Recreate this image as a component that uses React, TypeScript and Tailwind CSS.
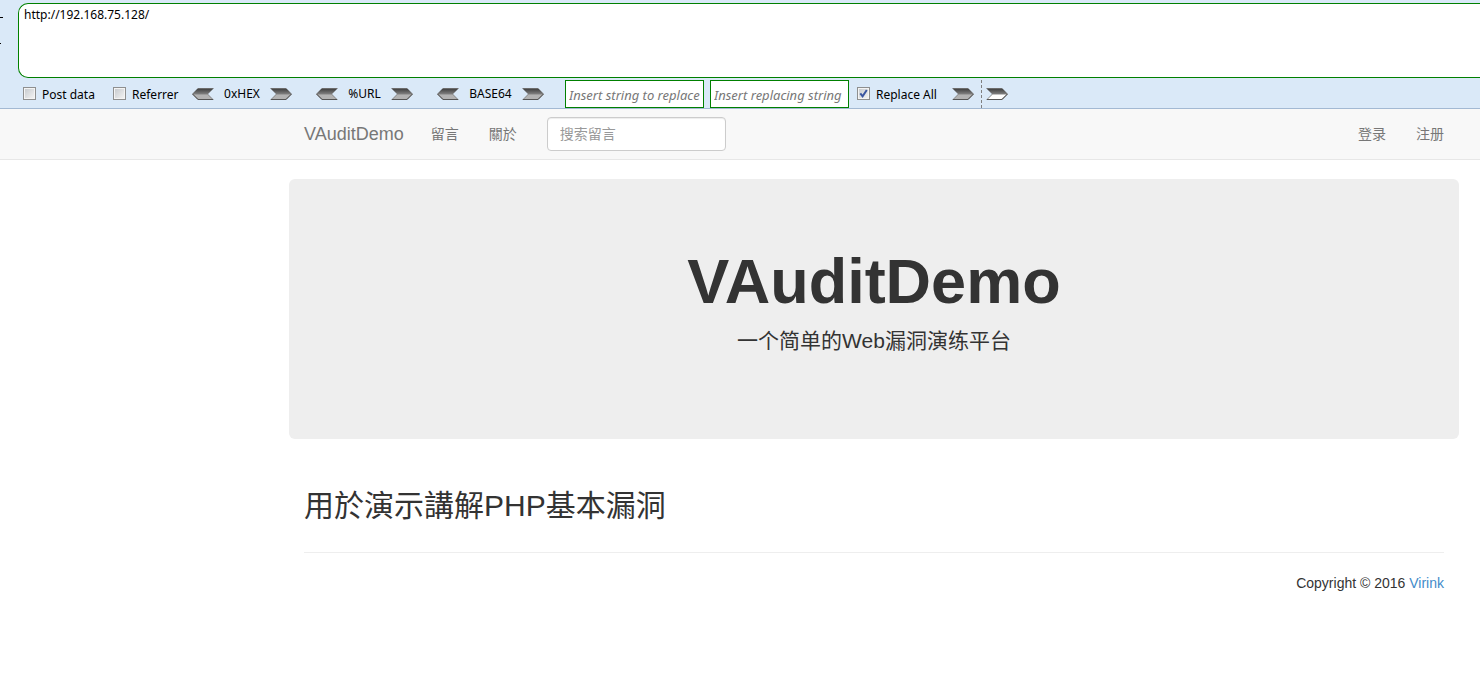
import { useState } from "react";

type Direction = "left" | "right";

function ArrowButton({ direction, label, light = false }: { direction: Direction; label: string; light?: boolean }) {
  const id = `arrow-${label.replace(/\W+/g, "-")}`;
  return (
    <button type="button" aria-label={label} className="h-3 w-[22px] shrink-0">
      <svg viewBox="0 0 22 12" className={direction === "left" ? "block h-3 w-[22px] -scale-x-100" : "block h-3 w-[22px]"}>
        <defs>
          <linearGradient id={id} x1="0" y1="0" x2="0" y2="1">
            <stop offset="0" stopColor="#808080" />
            <stop offset="0.12" stopColor="#484848" />
            <stop offset="0.55" stopColor="#858585" />
          </linearGradient>
        </defs>
        <path d="M0 0H16L22 6L16 12H0L6 6Z" fill={`url(#${id})`} />
        <path d="M6.5 6.5H20.5L15.5 11H2Z" fill={light ? "#ffffff" : "#b2b2b2"} />
        <path d="M1 11.5H16L21.5 6" fill="none" stroke="#555555" strokeWidth="1" />
      </svg>
    </button>
  );
}

function Check({ label, initial = false }: { label: string; initial?: boolean }) {
  const [checked, setChecked] = useState(initial);
  return (
    <label className="flex items-center gap-[6px] whitespace-nowrap">
      <span className="grid size-[13px] shrink-0">
        <input
          type="checkbox"
          checked={checked}
          onChange={(e) => setChecked(e.target.checked)}
          className="col-start-1 row-start-1 size-[13px] appearance-none border border-[#8e8f8f] bg-linear-to-br from-[#c4c8cc] to-[#f6f6f6] shadow-[inset_0_0_0_1px_#f4f4f4]"
        />
        {checked && (
          <svg viewBox="0 0 13 13" className="pointer-events-none col-start-1 row-start-1 size-[13px]">
            <path d="M3.3 6.3L5.6 9.3L9.8 3" fill="none" stroke="#3a55a0" strokeWidth="2" />
          </svg>
        )}
      </span>
      <span className="pt-[2px]">{label}</span>
    </label>
  );
}

function Codec({ name, className }: { name: string; className: string }) {
  return (
    <div className="flex items-center">
      <ArrowButton direction="left" label={`Decode ${name}`} />
      <span className={`text-center whitespace-nowrap ${className}`}>{name}</span>
      <ArrowButton direction="right" label={`Encode ${name}`} />
    </div>
  );
}

const replaceInput =
  "h-7 w-[139px] border border-[#008000] bg-white px-[3px] pt-[2px] text-[13px] italic text-black outline-none placeholder:text-[#777777]";

function Toolbar() {
  return (
    <section className="overflow-hidden border-b border-[#a3b9d3] bg-[#dae9f8] pt-[3px] font-['Noto_Sans','Noto_Sans_CJK_SC',sans-serif] text-[12px] leading-4 text-black">
      <div className="flex">
        <div className="flex w-[18px] shrink-0 flex-col gap-[25px] pt-[14px]">
          <span className="h-px w-[3px] bg-black" />
          <span className="h-px w-px bg-black" />
        </div>
        <textarea
          aria-label="URL"
          defaultValue="http://192.168.75.128/"
          className="block h-[75px] min-w-0 grow resize-none rounded-l-[10px] border border-r-0 border-[#008000] bg-white px-[5px] py-[3px] outline-none"
        />
      </div>
      <div className="flex h-[30px] items-center pl-[23px] pt-px">
        <div className="w-[90px] shrink-0">
          <Check label="Post data" />
        </div>
        <div className="w-[79px] shrink-0">
          <Check label="Referrer" />
        </div>
        <div className="flex shrink-0 gap-6">
          <Codec name="0xHEX" className="w-14" />
          <Codec name="%URL" className="w-[53px]" />
          <Codec name="BASE64" className="w-[63px]" />
        </div>
        <div className="ml-[21px] flex shrink-0 gap-[6px]">
          <input aria-label="String to replace" placeholder="Insert string to replace" className={replaceInput} />
          <input aria-label="Replacing string" placeholder="Insert replacing string" className={replaceInput} />
        </div>
        <div className="ml-2 w-[95px] shrink-0">
          <Check label="Replace All" initial />
        </div>
        <ArrowButton direction="right" label="Replace" />
        <div className="ml-[7px] mr-1 h-7 border-l border-dashed border-[#808080]" />
        <ArrowButton direction="right" label="Submit" light />
      </div>
    </section>
  );
}

const container = "ml-auto mr-[21px] w-full max-w-[1170px]";

function Navbar() {
  return (
    <nav className="border-b border-[#e7e7e7] bg-[#f8f8f8] text-[#777777]">
      <div className={`${container} flex h-[50px] items-center px-[15px]`}>
        <a href="#home" className="text-[18px] leading-5">VAuditDemo</a>
        <a href="#messages" className="ml-[27px]">留言</a>
        <a href="#about" className="ml-[30px]">關於</a>
        <input
          type="search"
          aria-label="搜索留言"
          placeholder="搜索留言"
          className="ml-[30px] h-[34px] w-[179px] rounded-[4px] border border-[#cccccc] bg-white px-3 shadow-[inset_0_1px_1px_rgba(0,0,0,0.075)] outline-none placeholder:text-[#999999]"
        />
        <a href="#login" className="ml-auto">登录</a>
        <a href="#register" className="ml-[30px]">注册</a>
      </div>
    </nav>
  );
}

export default function App() {
  return (
    <div className="min-h-screen bg-white font-['Liberation_Sans','Noto_Sans_CJK_SC',sans-serif] text-[14px] leading-5 text-[#333333]">
      <Toolbar />
      <Navbar />
      <main className={`${container} pt-[19px]`}>
        <header className="rounded-[6px] bg-[#eeeeee] px-[60px] pt-[68px] pb-[83px] text-center">
          <h1 className="text-[63px] leading-[69px] font-bold">VAuditDemo</h1>
          <p className="mt-[10px] text-[21px] leading-[30px]">一个简单的Web漏洞演练平台</p>
        </header>
        <div className="px-[15px]">
          <h2 className="mt-[50px] text-[30px] leading-[33px]">用於演示講解PHP基本漏洞</h2>
          <footer className="mt-[30px] border-t border-[#eeeeee] pt-5 text-right">
            <p>
              Copyright © 2016 <a href="#virink" className="text-[#428bca]">Virink</a>
            </p>
          </footer>
        </div>
      </main>
    </div>
  );
}
